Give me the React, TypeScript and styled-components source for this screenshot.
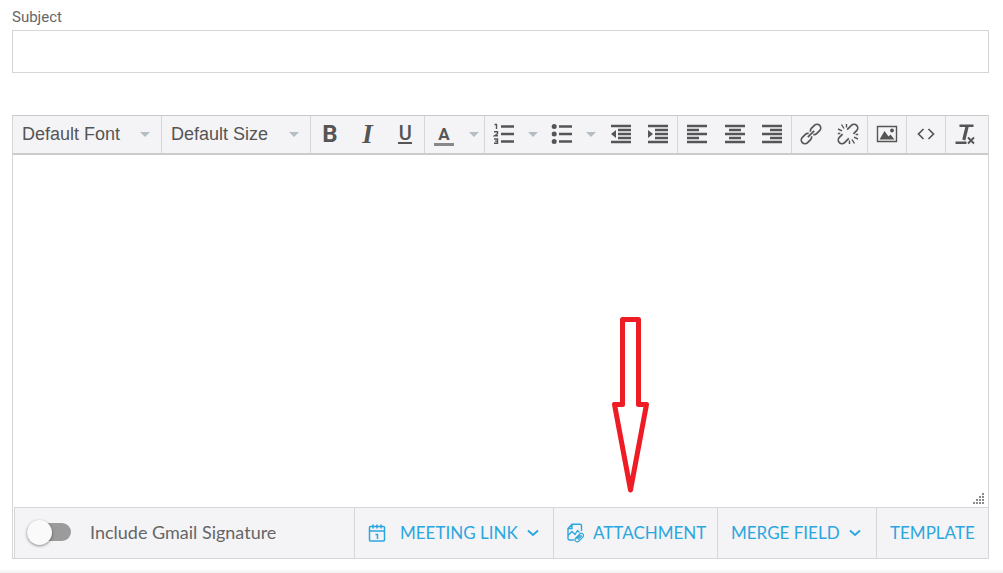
import React from "react";
import styled, { createGlobalStyle, css } from "styled-components";

const ink = "#555555";
const line = "#d5d6d8";
const panel = "#f4f4f7";
const blue = "#2ba6de";

const GlobalStyle = createGlobalStyle`
  *, *::before, *::after { box-sizing: border-box; }
  body { margin: 0; background: #ffffff; color: #666666; font-family: Lato, "Liberation Sans", sans-serif; }
  button, input, select, textarea { font: inherit; color: inherit; }
`;

const Page = styled.main`
  display: flex;
  flex-direction: column;
`;

const Form = styled.form`
  display: flex;
  flex-direction: column;
  padding: 6px 14px 10px 12px;
`;

const FieldLabel = styled.label`
  font-family: Roboto, sans-serif;
  font-size: 15px;
  line-height: 22px;
  margin-bottom: 2px;
`;

const SubjectInput = styled.input`
  width: 100%;
  height: 43px;
  padding: 0 12px;
  border: 1px solid ${line};
  border-radius: 0;
  background: #ffffff;
  outline: none;
`;

const Composer = styled.section`
  margin-top: 42px;
  border: 1px solid ${line};
  border-top-color: #c8c8c8;
`;

const Toolbar = styled.div`
  display: flex;
  height: 39px;
  background: ${panel};
  border-bottom: 2px solid #cbcbcb;
`;

const Group = styled.div<{ $width?: number }>`
  display: flex;
  padding-bottom: 1px;
  ${(p) =>
    p.$width
      ? css`
          flex: 0 0 ${p.$width}px;
          border-right: 1px solid ${line};
        `
      : css`
          flex: 1;
        `}
`;

const SelectBox = styled.div`
  display: flex;
  flex: 1;
  align-items: center;
  padding-right: 11px;
`;

const Select = styled.select`
  flex: 1;
  min-width: 0;
  height: 100%;
  padding: 0 0 0 9px;
  border: 0;
  outline: none;
  appearance: none;
  background: transparent;
  color: ${ink};
  font-family: "Liberation Sans", Arial, sans-serif;
  font-size: 18px;
  line-height: 24px;
`;

const ToolButton = styled.button<{ $narrow?: boolean }>`
  display: flex;
  flex: 0 1 ${(p) => (p.$narrow ? 21 : 38)}px;
  align-items: center;
  justify-content: center;
  min-width: 0;
  padding: 0;
  border: 0;
  background: transparent;
  color: ${ink};
  cursor: pointer;
`;

const Glyph = styled.span<{ $kind: "bold" | "italic" }>`
  font-family: ${(p) => (p.$kind === "bold" ? 'Roboto, sans-serif' : '"Liberation Serif", serif')};
  font-size: ${(p) => (p.$kind === "bold" ? 24 : 27)}px;
  font-style: ${(p) => (p.$kind === "bold" ? "normal" : "italic")};
  font-weight: 700;
  line-height: 24px;
`;

const BarGlyph = styled.span<{ $wide?: boolean }>`
  display: flex;
  justify-content: center;
  width: ${(p) => (p.$wide ? 20 : 14)}px;
  border-bottom: ${(p) => (p.$wide ? "3px solid #888888" : `2px solid ${ink}`)};
  margin-top: ${(p) => (p.$wide ? 3 : 0)}px;
  font-family: Roboto, sans-serif;
  font-size: ${(p) => (p.$wide ? 17 : 20)}px;
  font-weight: ${(p) => (p.$wide ? 700 : 500)};
  line-height: 18px;
`;

const EditorArea = styled.div`
  position: relative;
  display: flex;
`;

const MessageInput = styled.textarea`
  display: block;
  flex: 1;
  height: 352px;
  padding: 12px;
  border: 0;
  outline: none;
  resize: none;
  background: #ffffff;
`;

const Grip = styled.svg`
  position: absolute;
  right: 4px;
  bottom: 2px;
`;

const Pointer = styled.svg`
  position: absolute;
  right: 338px;
  bottom: 13px;
  pointer-events: none;
`;

const ActionBar = styled.div`
  display: flex;
  height: 51px;
  margin-left: 1px;
  background: ${panel};
  border: 1px solid ${line};
  border-width: 1px 0 0 1px;
`;

const SignatureOption = styled.label`
  display: flex;
  flex: 1;
  align-items: center;
  gap: 19px;
  padding: 0 0 2px 12px;
  font-size: 18px;
  line-height: 24px;
  white-space: nowrap;
`;

const Switch = styled.input`
  appearance: none;
  display: flex;
  align-items: center;
  width: 44px;
  height: 18px;
  margin: 0;
  border-radius: 9px;
  background: #9b9b9b;
  cursor: pointer;

  &::before {
    content: "";
    width: 25px;
    height: 25px;
    flex: none;
    border-radius: 50%;
    background: #fafafa;
    box-shadow: 0 1px 3px rgba(0, 0, 0, 0.45);
  }
  &:checked::before { margin-left: auto; }
`;

const Action = styled.button<{ $width: number }>`
  display: flex;
  flex: 0 0 ${(p) => p.$width}px;
  align-items: center;
  gap: 9px;
  padding: 0 0 0 13px;
  border: 0;
  border-left: 1px solid ${line};
  background: transparent;
  color: ${blue};
  font-size: 17px;
  line-height: 24px;
  white-space: nowrap;
  cursor: pointer;
`;

const CalendarIcon = styled.svg`
  margin-right: 5px;
`;

const NextPanelEdge = styled.div`
  height: 5px;
  background: linear-gradient(#ffffff, #ececec);
`;

const Caret = () => (
  <svg width="10" height="5" viewBox="0 0 10 5" aria-hidden="true">
    <path d="M0 0h10L5 5z" fill="#b4bdc3" />
  </svg>
);

const Chevron = () => (
  <svg width="12" height="8" viewBox="0 0 12 8" fill="none" stroke="currentColor" strokeWidth="2" aria-hidden="true">
    <path d="M1 1.5l5 4.5 5-4.5" />
  </svg>
);

const Icon = ({ children }: { children: React.ReactNode }) => (
  <svg width="22" height="22" viewBox="0 0 22 22" fill="none" stroke="currentColor" strokeWidth="1.7" aria-hidden="true">
    {children}
  </svg>
);

const Bars = ({ d }: { d: string }) => (
  <Icon>
    <path d={d} strokeWidth="2.4" />
  </Icon>
);

const Tool = ({ name, children }: { name: string; children: React.ReactNode }) => (
  <ToolButton type="button" aria-label={name} title={name}>{children}</ToolButton>
);

const MenuTool = ({ name }: { name: string }) => (
  <ToolButton type="button" $narrow aria-label={name}><Caret /></ToolButton>
);

const indentBars = "M1 3h20M8 7h13M8 11h13M8 15h13M1 19h20";

export default function App() {
  return (
    <Page>
      <GlobalStyle />
      <Form>
        <FieldLabel htmlFor="subject">Subject</FieldLabel>
        <SubjectInput id="subject" type="text" />
        <Composer aria-label="Message">
          <Toolbar role="toolbar" aria-label="Formatting">
            <Group $width={149}>
              <SelectBox>
                <Select aria-label="Font"><option>Default Font</option></Select>
                <Caret />
              </SelectBox>
            </Group>
            <Group $width={149}>
              <SelectBox>
                <Select aria-label="Size"><option>Default Size</option></Select>
                <Caret />
              </SelectBox>
            </Group>
            <Group $width={114}>
              <Tool name="Bold"><Glyph $kind="bold">B</Glyph></Tool>
              <Tool name="Italic"><Glyph $kind="italic">I</Glyph></Tool>
              <Tool name="Underline"><BarGlyph>U</BarGlyph></Tool>
            </Group>
            <Group $width={60}>
              <Tool name="Text color"><BarGlyph $wide>A</BarGlyph></Tool>
              <MenuTool name="Choose text color" />
            </Group>
            <Group $width={193}>
              <Tool name="Numbered list">
                <Icon>
                  <path d="M8 3.5h13M8 11h13M8 18.5h13" strokeWidth="2.4" />
                  <path d="M1.5 1.5h2v4.5M1 8.7h3.5v2L1.5 12.8H5M1 16h3.5v4.3H1M2 18.1h2.5" strokeWidth="1.4" />
                </Icon>
              </Tool>
              <MenuTool name="Numbered list styles" />
              <Tool name="Bulleted list">
                <Icon>
                  <path d="M8 3.5h13M8 11h13M8 18.5h13" strokeWidth="2.4" />
                  <g fill="currentColor" stroke="none">
                    <circle cx="3.2" cy="3.5" r="2.5" />
                    <circle cx="3.2" cy="11" r="2.5" />
                    <circle cx="3.2" cy="18.5" r="2.5" />
                  </g>
                </Icon>
              </Tool>
              <MenuTool name="Bulleted list styles" />
              <Tool name="Decrease indent">
                <Icon>
                  <path d={indentBars} strokeWidth="2.4" />
                  <path d="M6 7v8L1 11z" fill="currentColor" stroke="none" />
                </Icon>
              </Tool>
              <Tool name="Increase indent">
                <Icon>
                  <path d={indentBars} strokeWidth="2.4" />
                  <path d="M1 7v8l5-4z" fill="currentColor" stroke="none" />
                </Icon>
              </Tool>
            </Group>
            <Group $width={114}>
              <Tool name="Align left"><Bars d="M1 3h20M1 7h12M1 11h20M1 15h12M1 19h20" /></Tool>
              <Tool name="Align center"><Bars d="M1 3h20M5 7h12M1 11h20M5 15h12M1 19h20" /></Tool>
              <Tool name="Align right"><Bars d="M1 3h20M9 7h12M1 11h20M9 15h12M1 19h20" /></Tool>
            </Group>
            <Group $width={76}>
              <Tool name="Insert link">
                <Icon>
                  <g transform="rotate(-45 11 11)">
                    <path d="M9.8 13a3.600 3.600 0 0 1-3 1.700H2.500a3.700 3.700 0 0 1 0-7.400h4.300a3.600 3.600 0 0 1 3 1.700" />
                    <path d="M12.200 9a3.600 3.600 0 0 1 3-1.700h4.300a3.700 3.700 0 0 1 0 7.400h-4.300a3.600 3.600 0 0 1-3-1.700" />
                    <path d="M6.500 11h9" />
                  </g>
                </Icon>
              </Tool>
              <Tool name="Remove link">
                <Icon>
                  <g transform="rotate(-45 11 11)">
                    <path d="M8.500 14.700H2.500a3.700 3.700 0 0 1 0-7.400H7M13.500 7.300h6a3.700 3.700 0 0 1 0 7.400H15" />
                  </g>
                  <path d="M4.500 1.500l2.500 4M9.500 1v3.500M1 6l4 1.800M17.500 20.500l-2.500-4M12.500 21v-3.500M21 16l-4-1.800M.8 10.500h2.500M18.700 11.500h2.500" strokeWidth="1.400" />
                </Icon>
              </Tool>
            </Group>
            <Group $width={39}>
              <Tool name="Insert image">
                <Icon>
                  <path d="M1.500 3.500h19v15h-19z" strokeWidth="1.400" />
                  <path d="M3.500 16.500l5-8.500 4 5.500 2-2 4 5z" fill="currentColor" stroke="none" />
                  <circle cx="16" cy="7.500" r="1.900" fill="currentColor" stroke="none" />
                </Icon>
              </Tool>
            </Group>
            <Group $width={39}>
              <Tool name="View source">
                <Icon><path d="M8.500 6L3.500 11l5 5M13.500 6l5 5-5 5" /></Icon>
              </Tool>
            </Group>
            <Group>
              <Tool name="Clear formatting">
                <Icon>
                  <path d="M5.500 2.800h14M1.500 19.800h11" strokeWidth="2.600" />
                  <path d="M13.200 3L9.800 17" strokeWidth="3.200" />
                  <path d="M14 14.500l6 6M20 14.500l-6 6" strokeWidth="1.900" />
                </Icon>
              </Tool>
            </Group>
          </Toolbar>
          <EditorArea>
            <MessageInput aria-label="Message body" />
            <Grip width="12" height="12" viewBox="0 0 12 12" aria-hidden="true">
              <path
                d="M10 0h2v2h-2zM10 3h2v2h-2zM7 3h2v2H7zM10 6h2v2h-2zM7 6h2v2H7zM4 6h2v2H4zM10 9h2v2h-2zM7 9h2v2H7zM4 9h2v2H4zM1 9h2v2H1z"
                fill="#8c8c8c"
              />
            </Grip>
            <Pointer width="39" height="177" viewBox="0 0 39 177" fill="none" stroke="#ee1c25" strokeWidth="5" aria-hidden="true">
              <path d="M11.500 2.500h16v85h8L19.500 173 3.500 87.500h8z" strokeLinejoin="round" />
            </Pointer>
          </EditorArea>
          <ActionBar>
            <SignatureOption>
              <Switch type="checkbox" role="switch" />
              Include Gmail Signature
            </SignatureOption>
            <Action type="button" $width={199}>
              <CalendarIcon width="18" height="18" viewBox="0 0 18 18" fill="none" stroke="currentColor" strokeWidth="1.500" aria-hidden="true">
                <rect x="1.500" y="2.500" width="15" height="14.500" rx="1" />
                <path d="M1.500 7h15M5 .5v4M9 .5v4M13 .5v4M7.500 10.500h2v4.500" />
              </CalendarIcon>
              MEETING LINK
              <Chevron />
            </Action>
            <Action type="button" $width={164}>
              <svg width="17" height="20" viewBox="0 0 17 20" fill="none" stroke="currentColor" strokeWidth="1.400" aria-hidden="true">
                <path d="M7 17H2.500a1.500 1.500 0 0 1-1.500-1.500V5.500L5 1.200h8a1.500 1.500 0 0 1 1.500 1.500V8M5 1.200v4.300H1M1.500 12L5 8.500l3 3 2.500-4 2 2" />
                <path d="M15 12.500l-4 4M16.300 13.700l-4.600 4.600a2.200 2.200 0 0 1-3.100-3.100l4.500-4.500a1.600 1.600 0 0 1 2.400 0l.6.6a1.600 1.600 0 0 1 0 2.400M13.500 11.800l-4 4" strokeWidth="1.200" />
              </svg>
              ATTACHMENT
            </Action>
            <Action type="button" $width={159}>
              MERGE FIELD
              <Chevron />
            </Action>
            <Action type="button" $width={112}>TEMPLATE</Action>
          </ActionBar>
        </Composer>
      </Form>
      <NextPanelEdge />
    </Page>
  );
}
